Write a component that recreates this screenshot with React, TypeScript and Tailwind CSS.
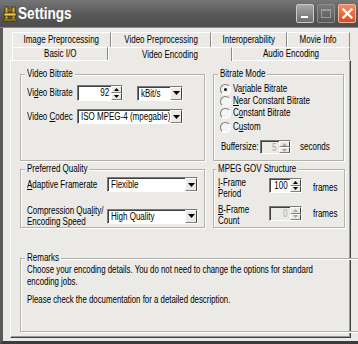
import React from 'react';

const FONT = "font-['Liberation_Sans',Arial,sans-serif]";

// the reference text is narrow (Tahoma squeezed); Liberation Sans is squeezed to match
function T({ children, o = 'origin-left', s = 'scale-x-[0.8]' }: { children: React.ReactNode; o?: string; s?: string }) {
  return <span className={`inline-block whitespace-nowrap ${o} ${s}`}>{children}</span>;
}

function Arrow({ up = false, disabled = false }: { up?: boolean; disabled?: boolean }) {
  return (
    <svg width="5" height="3" viewBox="0 0 5 3" className="block">
      <polygon points={up ? '0,3 5,3 2.5,0' : '0,0 5,0 2.5,3'} fill={disabled ? '#a8a8a8' : '#000'} />
    </svg>
  );
}

function Spinner({ value, w, h = 'h-[16px]', disabled = false }: { value: string; w: string; h?: string; disabled?: boolean }) {
  return (
    <div className={`flex ${w} ${h} shrink-0 border border-t-[#7a7a7a] border-l-[#7a7a7a] border-b-white border-r-white shadow-[inset_1px_1px_0_#404040] ${disabled ? 'bg-[#ebeae6] text-[#a8a8a8]' : 'bg-white'}`}>
      <div className="flex-1 flex justify-end pr-[2px] pt-[1px] leading-[12px]">
        <T o="origin-right">{value}</T>
      </div>
      <div className="w-[11px] flex flex-col">
        <div className="flex-1 flex items-center justify-center bg-[#ebeae6] border-t border-l border-t-white border-l-white border-b border-r border-b-[#808080] border-r-[#404040]">
          <Arrow up disabled={disabled} />
        </div>
        <div className="flex-1 flex items-center justify-center bg-[#ebeae6] border-t border-l border-t-white border-l-white border-b border-r border-b-[#808080] border-r-[#404040]">
          <Arrow disabled={disabled} />
        </div>
      </div>
    </div>
  );
}

function Select({ value, w }: { value: string; w: string }) {
  return (
    <div className={`flex ${w} h-[15px] shrink-0 bg-white border border-t-[#7a7a7a] border-l-[#7a7a7a] border-b-white border-r-white shadow-[inset_1px_1px_0_#404040]`}>
      <div className="flex-1 pl-[3px] leading-[13px] overflow-hidden">
        <T>{value}</T>
      </div>
      <div className="w-[12px] flex items-center justify-center bg-[#ebeae6] border-t border-l border-t-white border-l-white border-b border-r border-b-[#808080] border-r-[#404040]">
        <svg width="7" height="4" viewBox="0 0 7 4" className="block">
          <polygon points="0,0 7,0 3.5,4" fill="#000" />
        </svg>
      </div>
    </div>
  );
}

function Radio({ checked = false, children }: { checked?: boolean; children: React.ReactNode }) {
  return (
    <div className="flex items-center h-[12px]">
      <div className="w-[11px] h-[11px] shrink-0 rounded-full bg-[#f4f4f2] border border-t-[#7a7a7a] border-l-[#7a7a7a] border-b-white border-r-white flex items-center justify-center">
        {checked && <div className="w-[3px] h-[3px] rounded-full bg-black" />}
      </div>
      <span className="ml-[2px]">
        <T>{children}</T>
      </span>
    </div>
  );
}

function Group({ title, lw, className, children }: { title: string; lw: string; className: string; children: React.ReactNode }) {
  return (
    <fieldset className={`border border-[#b2b1aa] shadow-[inset_1px_1px_0_#fff,1px_1px_0_#fff] ${className}`}>
      <legend className={`-ml-[2px] px-[2px] ${lw} bg-[#ebeae6] leading-[12px] overflow-visible`}>
        <T>{title}</T>
      </legend>
      {children}
    </fieldset>
  );
}

function TitleIcon() {
  return (
    <svg width="14" height="16" viewBox="0 0 14 16" className="block">
      <rect x="2" y="1" width="3" height="14" fill="#d9b52a" stroke="#3a2c08" strokeWidth="0.8" />
      <rect x="9" y="1" width="3" height="14" fill="#d9b52a" stroke="#3a2c08" strokeWidth="0.8" />
      <rect x="1" y="7" width="12" height="3" fill="#f0d050" stroke="#3a2c08" strokeWidth="0.8" />
      <rect x="5" y="3" width="4" height="2" fill="#8a6a10" />
      <rect x="0.5" y="13" width="13" height="2" fill="#b08a18" stroke="#3a2c08" strokeWidth="0.6" />
    </svg>
  );
}

function TitleBar() {
  return (
    <div className="h-[28px] shrink-0 flex items-center pl-[3px] pr-[2px] bg-linear-to-b from-[#767676] via-[#5a5a5a] to-[#4c4c4c] border-b border-[#8a8a8a]">
      <TitleIcon />
      <span className="ml-[1px] text-white font-bold text-[17px] leading-[20px]">
        <T>Settings</T>
      </span>
      <div className="ml-auto flex gap-[3px]">
        <div className="w-[18px] h-[19px] rounded-[2px] border border-[#c9c9c9] bg-linear-to-b from-[#a8a8a8] to-[#6e6e6e] flex items-end pl-[4px] pb-[4px]">
          <div className="w-[7px] h-[2px] bg-white" />
        </div>
        <div className="w-[18px] h-[19px] rounded-[2px] border border-[#8c8c8c] bg-linear-to-b from-[#7a7a7a] to-[#5a5a5a] flex items-center justify-center">
          <div className="w-[10px] h-[9px] border border-[#9a9a9a] border-t-2" />
        </div>
        <div className="w-[18px] h-[19px] rounded-[2px] border border-[#f0b8a0] bg-linear-to-b from-[#f08c60] to-[#d84c22] flex items-center justify-center">
          <svg width="11" height="11" viewBox="0 0 11 11" className="block">
            <path d="M1.5 1.5 L9.5 9.5 M9.5 1.5 L1.5 9.5" stroke="#fff" strokeWidth="2.4" strokeLinecap="square" />
          </svg>
        </div>
      </div>
    </div>
  );
}

function Tab({ label, w, selected = false }: { label: string; w: string; selected?: boolean }) {
  return (
    <div
      className={`${w} flex items-center justify-center border-t border-l border-t-white border-l-white border-r border-r-[#8a8a8a] ${
        selected ? 'relative z-10 h-[14px] -mb-[1px] bg-[#ebeae6]' : 'h-full bg-[#ebeae6]'
      }`}
    >
      <T o="origin-center">{label}</T>
    </div>
  );
}

export default function App() {
  return (
    <div className={`w-[358px] h-[344px] flex flex-col bg-[#ebeae6] text-[10px] leading-[12px] text-black overflow-hidden ${FONT}`}>
      <TitleBar />
      <div className="flex-1 flex flex-col border-l-[3px] border-b-[3px] border-l-[#5a5a5a] border-b-[#3c3c3c] pl-[7px] pr-[7px] pt-[4px]">
        {/* tab rows */}
        <div className="flex h-[15px] pl-[2px]">
          <Tab label="Image Preprocessing" w="w-[99px]" />
          <Tab label="Video Preprocessing" w="w-[100px]" />
          <Tab label="Interoperability" w="w-[76px]" />
          <Tab label="Movie Info" w="w-[63px]" />
        </div>
        <div className="flex items-start h-[13px] pl-[2px]">
          <Tab label="Basic I/O" w="w-[96px]" />
          <Tab label="Video Encoding" w="w-[124px]" selected />
          <Tab label="Audio Encoding" w="w-[118px]" />
        </div>

        {/* tab panel */}
        <div className="h-[278px] w-[341px] border-t border-l border-t-white border-l-white border-r border-b border-r-[#404040] border-b-[#404040] shadow-[inset_-1px_-1px_0_#9a9a9a] pl-[9px] pt-[7px] flex flex-col">
          <div className="flex">
            <Group title="Video Bitrate" lw="w-[50px]" className="w-[185px] h-[93px] pl-[6px]">
              <div className="flex items-center mt-[5px]">
                <span className="w-[50px]"><T>Vi<u>d</u>eo Bitrate</T></span>
                <Spinner value="92" w="w-[46px]" />
                <div className="ml-[14px]">
                  <Select value="kBit/s" w="w-[46px]" />
                </div>
              </div>
              <div className="flex items-center mt-[8px]">
                <span className="w-[50px]"><T>Video <u>C</u>odec</T></span>
                <Select value="ISO MPEG-4 (mpegable)" w="w-[106px]" />
              </div>
            </Group>
            <Group title="Bitrate Mode" lw="w-[49px]" className="ml-[8px] w-[131px] h-[93px] pl-[6px]">
              <div className="mt-[3px]">
                <Radio checked>Va<u>r</u>iable Bitrate</Radio>
                <Radio><u>N</u>ear Constant Bitrate</Radio>
                <Radio>C<u>o</u>nstant Bitrate</Radio>
                <div className="mt-[2px]">
                  <Radio>C<u>u</u>stom</Radio>
                </div>
              </div>
              <div className="flex items-center mt-[7px] pl-[1px]">
                <span className="w-[39px]"><T>Buffersize:</T></span>
                <Spinner value="5" w="w-[31px]" h="h-[14px]" disabled />
                <span className="ml-[9px]"><T>seconds</T></span>
              </div>
            </Group>
          </div>

          <div className="flex mt-[2px]">
            <Group title="Preferred Quality" lw="w-[64px]" className="w-[185px] h-[65px] pl-[6px]">
              <div className="flex items-center mt-[2px]">
                <span className="w-[80px]"><T><u>A</u>daptive Framerate</T></span>
                <Select value="Flexible" w="w-[91px]" />
              </div>
              <div className="flex items-center mt-[13px]">
                <span className="w-[80px] leading-[11px]"><T>Compression Qua<u>l</u>ity/<br />Encoding Speed</T></span>
                <Select value="High Quality" w="w-[91px]" />
              </div>
            </Group>
            <Group title="MPEG GOV Structure" lw="w-[82px]" className="ml-[8px] w-[131px] h-[65px] pl-[4px]">
              <div className="flex items-start mt-[2px]">
                <span className="w-[51px] leading-[11px]"><T><u>I</u>-Frame<br />Period</T></span>
                <div className="mt-[1px]">
                  <Spinner value="100" w="w-[33px]" h="h-[15px]" />
                </div>
                <span className="ml-[11px] mt-[5px]"><T>frames</T></span>
              </div>
              <div className="flex items-start mt-[5px]">
                <span className="w-[51px] leading-[11px]"><T><u>B</u>-Frame<br />Count</T></span>
                <div className="mt-[2px]">
                  <Spinner value="0" w="w-[33px]" h="h-[15px]" disabled />
                </div>
                <span className="ml-[11px] mt-[4px]"><T>frames</T></span>
              </div>
            </Group>
          </div>

          <Group title="Remarks" lw="w-[36px]" className="mt-[24px] w-[322px] h-[80px] pl-[6px] pr-[3px]">
            <div className="flex">
              <div className="flex-1 leading-[11.5px] overflow-hidden">
                <T s="scale-x-[0.785]">
                  Choose your encoding details. You do not need to change the options for standard<br />encoding jobs.
                </T>
                <div className="mt-[7px]">
                  <T s="scale-x-[0.785]">Please check the documentation for a detailed description.</T>
                </div>
              </div>
              <div className="w-[13px] h-[62px] shrink-0 flex flex-col justify-between bg-[#efeeea]">
                <div className="h-[13px] flex items-center justify-center border border-[#d8d7d0] bg-[#f2f1ed]">
                  <svg width="7" height="4" viewBox="0 0 7 4" className="block"><path d="M0.5 3.5 L3.5 0.5 L6.5 3.5" stroke="#b8b8b8" fill="none" /></svg>
                </div>
                <div className="h-[13px] flex items-center justify-center border border-[#d8d7d0] bg-[#f2f1ed]">
                  <svg width="7" height="4" viewBox="0 0 7 4" className="block"><path d="M0.5 0.5 L3.5 3.5 L6.5 0.5" stroke="#b8b8b8" fill="none" /></svg>
                </div>
              </div>
            </div>
          </Group>
        </div>
      </div>
    </div>
  );
}
